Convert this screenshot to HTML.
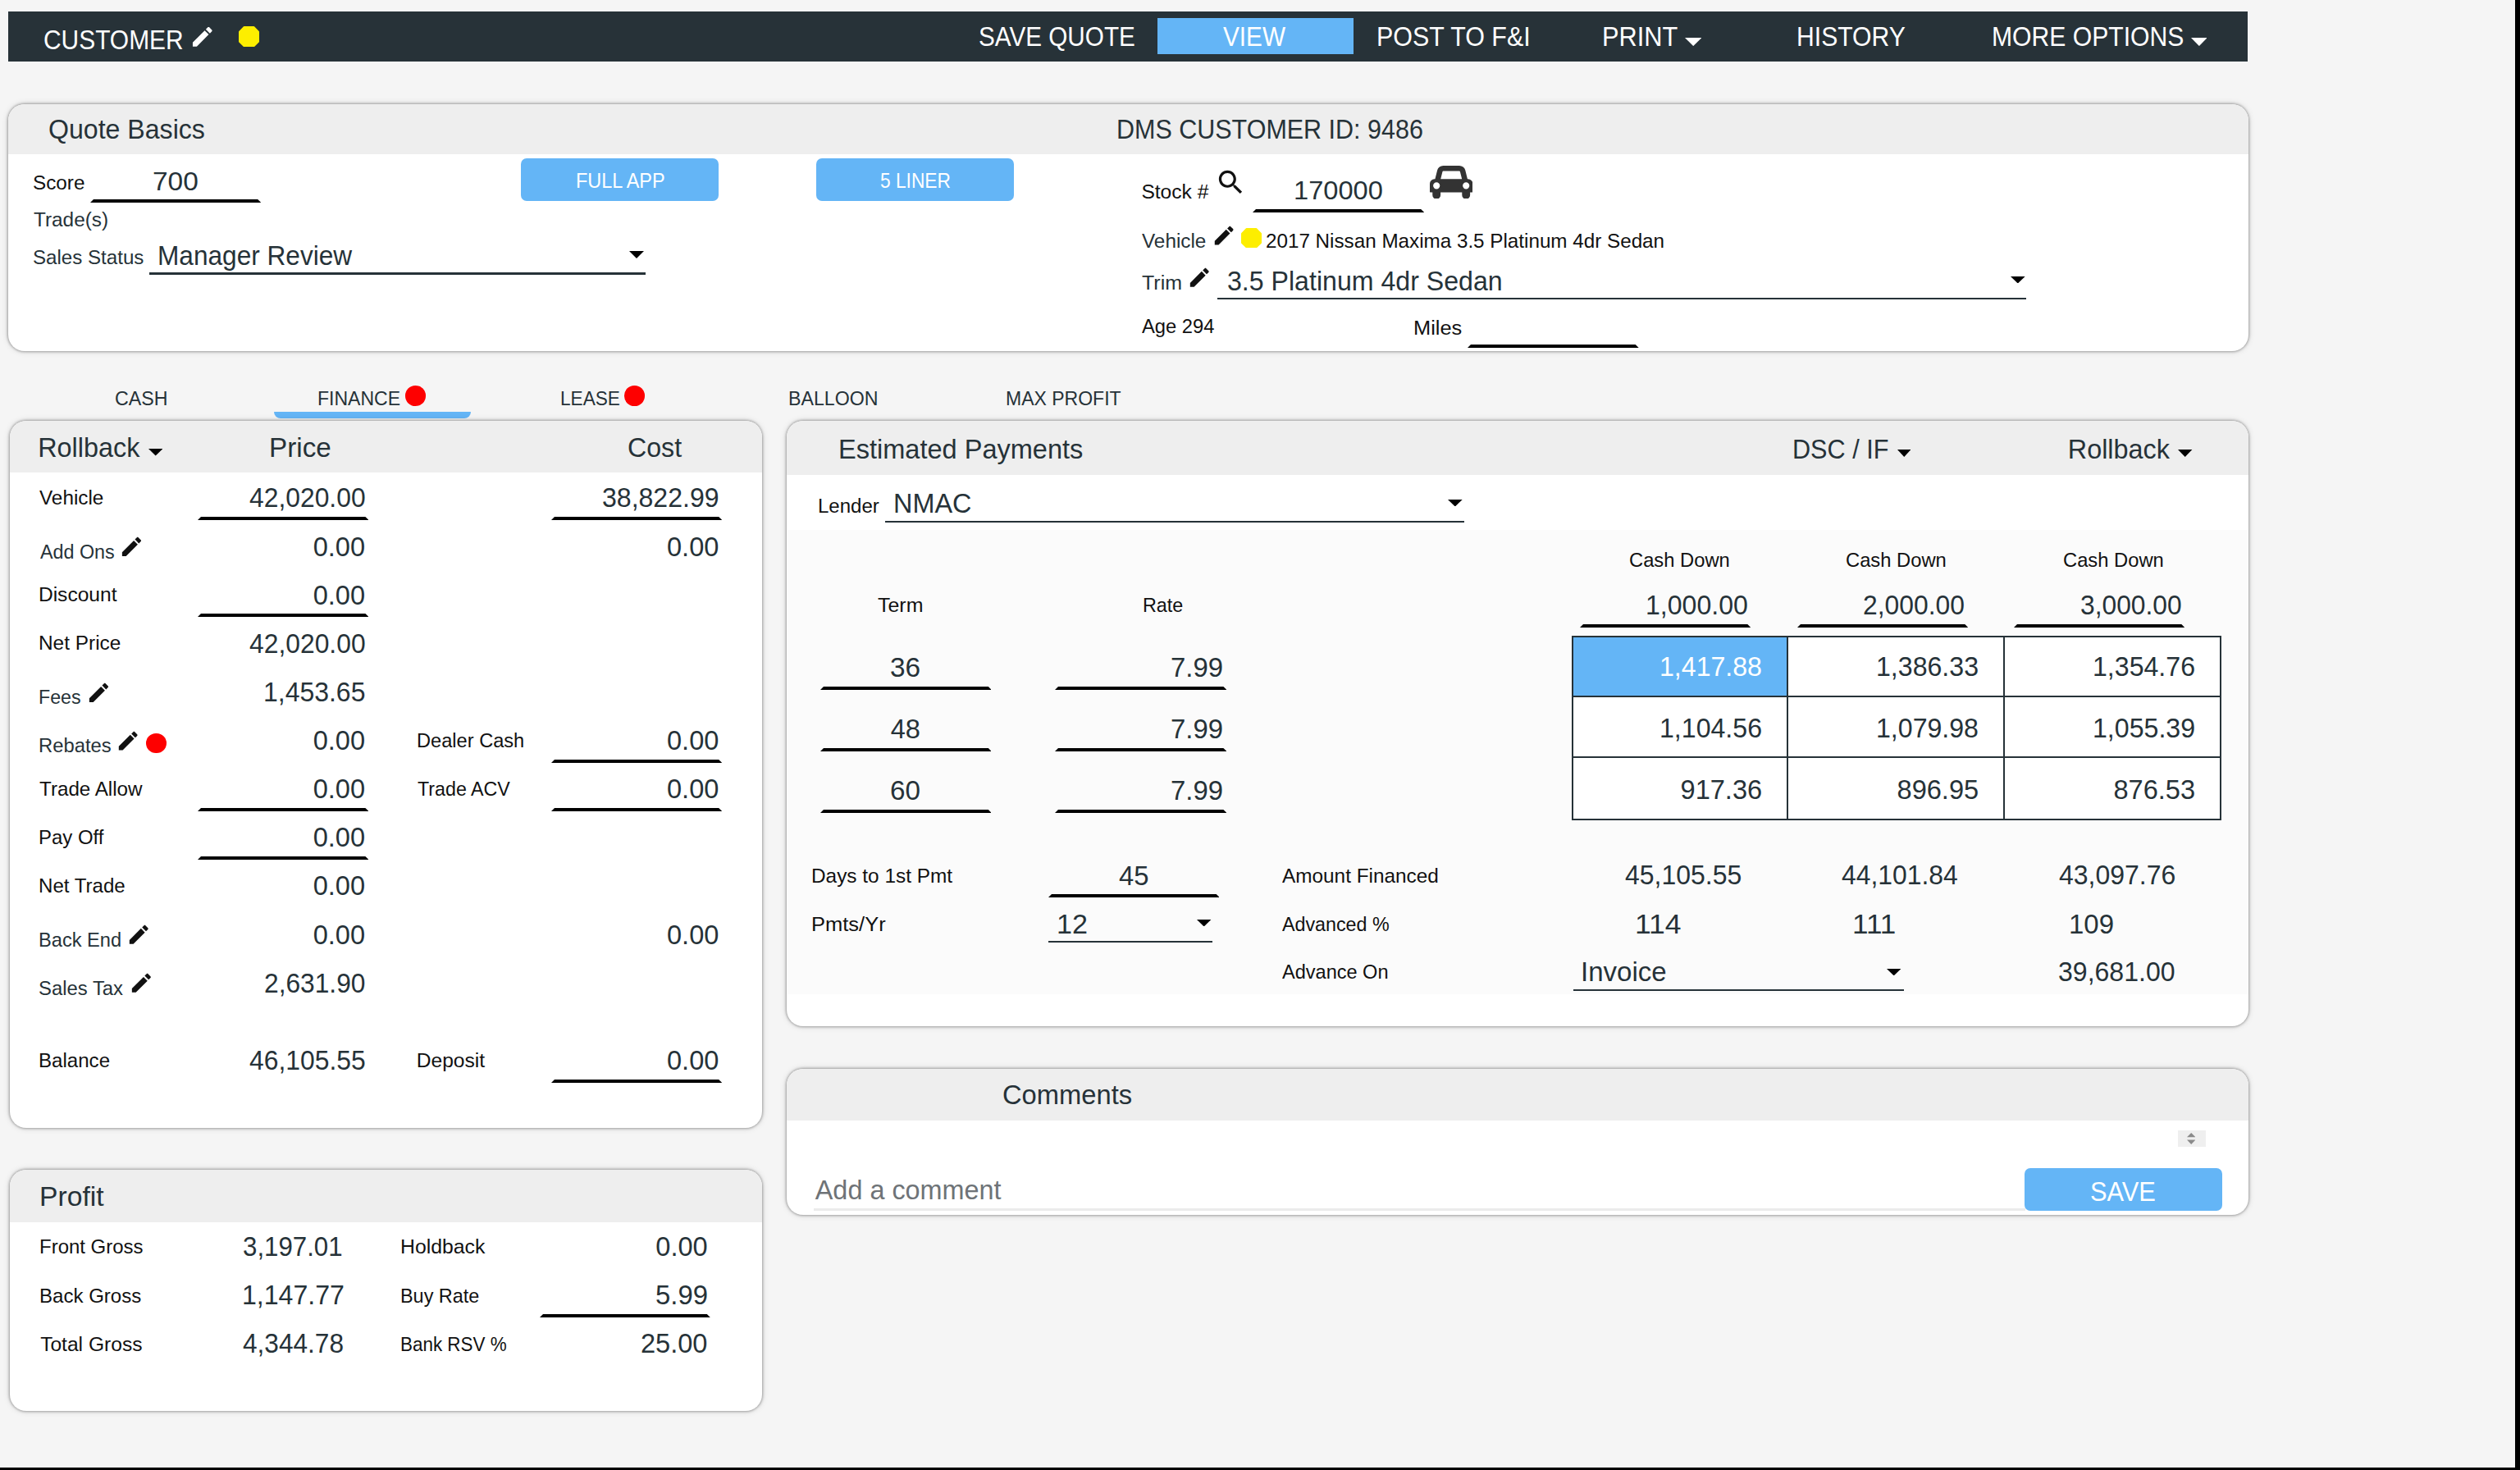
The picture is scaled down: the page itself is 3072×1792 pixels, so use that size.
<!DOCTYPE html>
<html lang="en">
<head>
<meta charset="utf-8">
<title>Desking - Quote</title>
<style>
html,body{margin:0;padding:0}
body{width:3072px;height:1792px;overflow:hidden;background:#000;font-family:"Liberation Sans", Arial, sans-serif;position:relative}
#page{position:absolute;left:0;top:0;width:3066.4px;height:1789.2px;background:#f5f5f5;overflow:hidden}
.r{position:absolute;display:block}
.t{position:absolute;white-space:pre;line-height:1;margin:0;padding:0;transform-origin:0 0}
.card{position:absolute;background:#fff;border-radius:20px;box-shadow:0 0 3px 1px rgba(0,0,0,.3),0 0 8px rgba(0,0,0,.14);overflow:hidden}
.chead{position:absolute;left:0;top:0;width:100%;background:#eeeeee}
.btn{background:#64b5f6;border-radius:7px}
.grid{background:#fff}
.grid .gl{background:#263238}
.k-nav{font-size:33px}
.k-title{font-size:32.4px}
.k-label{font-size:24.6px}
.k-val{font-size:32.6px}
.k-inp{font-size:32.2px}
.k-sel{font-size:32.4px}
.k-tab{font-size:24.4px}
.k-btn{font-size:26.6px}
.k-save{font-size:32.4px}
.k-ph{font-size:32.4px}
.k-veh{font-size:24.6px}
</style>
</head>
<body>
<div id="page">
<header id="hdr" aria-label="Top bar">
<div class="r bar" style="left:10.0px;top:14.3px;width:2730.0px;height:60.3px;background:#273238;"></div>
<svg class="r ico" style="left:230.8px;top:29.1px" width="31.6" height="31.6" viewBox="0 0 24 24"><path d="M3 17.25V21h3.75L17.81 9.940l-3.75-3.75L3 17.25zM20.71 7.040c.39-.39.39-1.020 0-1.410l-2.340-2.340c-.39-.39-1.020-.39-1.410 0l-1.830 1.830 3.750 3.750 1.830-1.830z" fill="#fff"/></svg>
<svg class="r dot" style="left:290.5px;top:31.7px" width="25.0" height="25.4" viewBox="0 0 25.0 25.4"><path d="M6.8 1.2L18.2 1.2L23.8 6.8L23.8 18.7L18.2 24.2L6.8 24.2L1.2 18.7L1.2 6.8Z" fill="#fdee00" stroke="#fdee00" stroke-width="2.4" stroke-linejoin="round"/></svg>
<div class="r navbtn" style="left:1410.7px;top:21.8px;width:239.3px;height:44.3px;background:#64b5f6;"></div>
<svg class="r tri" style="left:2053.5px;top:45.7px" width="20.4" height="10.1" viewBox="0 0 20.4 10.1"><path d="M0 0H20.4L10.20 10.1Z" fill="#fff"/></svg>
<svg class="r tri" style="left:2670.6px;top:45.7px" width="19.8" height="10.1" viewBox="0 0 19.8 10.1"><path d="M0 0H19.8L9.90 10.1Z" fill="#fff"/></svg>
<div class="t k-nav" style="left:53.46px;top:32px;color:#fff;transform:scaleX(0.9062)">CUSTOMER</div>
<div class="t k-nav" style="left:1192.55px;top:28px;color:#fff;transform:scaleX(0.8998)">SAVE QUOTE</div>
<div class="t k-nav" style="left:1491.43px;top:28px;color:#fff;transform:scaleX(0.9016)">VIEW</div>
<div class="t k-nav" style="left:1677.70px;top:28px;color:#fff;transform:scaleX(0.9218)">POST TO F&amp;I</div>
<div class="t k-nav" style="left:1953.47px;top:28px;color:#fff;transform:scaleX(0.9312)">PRINT</div>
<div class="t k-nav" style="left:2190.32px;top:28px;color:#fff;transform:scaleX(0.9131)">HISTORY</div>
<div class="t k-nav" style="left:2428.02px;top:28px;color:#fff;transform:scaleX(0.9132)">MORE OPTIONS</div>
</header>
<section id="qb" aria-label="Quote Basics">
<div class="card" style="left:10px;top:126.5px;width:2731px;height:301.5px"><div class="chead" style="height:61.5px"></div></div>
<svg class="r ul" style="left:110.3px;top:243.2px" width="208.2" height="4" viewBox="0 0 208.2 4"><path d="M4 0H204.2L208.2 4H0Z" fill="#000"/></svg>
<div class="r ul" style="left:182.3px;top:332.3px;width:604.9px;height:2.3px;background:#263238;"></div>
<svg class="r tri" style="left:767.0px;top:305.5px" width="18.0" height="9.0" viewBox="0 0 18.0 9.0"><path d="M0 0H18.0L9.00 9.0Z" fill="#000"/></svg>
<div class="r btn" style="left:635.4px;top:193.2px;width:240.8px;height:51.8px"></div>
<div class="r btn" style="left:995.4px;top:193.2px;width:240.7px;height:51.8px"></div>
<svg class="r ico" style="left:1480.5px;top:202.7px" width="38.8" height="38.8" viewBox="0 0 24 24"><path d="M15.5 14h-.79l-.28-.27C15.410 12.590 16 11.110 16 9.500 16 5.910 13.090 3 9.500 3S3 5.910 3 9.500 5.910 16 9.500 16c1.610 0 3.090-.59 4.230-1.570l.27.28v.79l5 4.990L20.490 19l-4.990-5zm-6 0C7.010 14 5 11.990 5 9.500S7.010 5 9.500 5 14 7.010 14 9.500 11.990 14 9.500 14z" fill="#111"/></svg>
<svg class="r ul" style="left:1527.0px;top:254.5px" width="209.2" height="4" viewBox="0 0 209.2 4"><path d="M4 0H205.2L209.2 4H0Z" fill="#000"/></svg>
<svg class="r ico" id="car" style="left:1742.6px;top:201.7px" width="52.4" height="40.6" viewBox="0 128 2048 1600" preserveAspectRatio="none"><path d="M480 1088q0-66-47-113t-113-47-113 47-47 113 47 113 113 47 113-47 47-113zm36-320h1016l-89-357q-2-8-14-17.500t-21-9.500h-768q-9 0-21 9.500t-14 17.500zm1372 320q0-66-47-113t-113-47-113 47-47 113 47 113 113 47 113-47 47-113zm160-96v384q0 14-9 23t-23 9h-96v128q0 80-56 136t-136 56-136-56-56-136v-128h-1024v128q0 80-56 136t-136 56-136-56-56-136v-128h-96q-14 0-23-9t-9-23v-384q0-93 65.500-158.500t158.500-65.500h28l105-419q23-94 104-157.500t179-63.500h768q98 0 179 63.500t104 157.500l105 419h28q93 0 158.500 65.500t65.500 158.500z" fill="#333"/></svg>
<svg class="r ico" style="left:1476.6px;top:272.1px" width="30.3" height="30.3" viewBox="0 0 24 24"><path d="M3 17.25V21h3.75L17.81 9.940l-3.75-3.75L3 17.25zM20.71 7.040c.39-.39.39-1.020 0-1.410l-2.340-2.340c-.39-.39-1.020-.39-1.410 0l-1.830 1.830 3.750 3.750 1.830-1.830z" fill="#111"/></svg>
<svg class="r dot" style="left:1512.9px;top:277.9px" width="25.0" height="24.5" viewBox="0 0 25.0 24.5"><path d="M6.8 1.2L18.2 1.2L23.8 6.8L23.8 17.8L18.2 23.3L6.8 23.3L1.2 17.8L1.2 6.8Z" fill="#fdee00" stroke="#fdee00" stroke-width="2.4" stroke-linejoin="round"/></svg>
<svg class="r ico" style="left:1446.9px;top:322.9px" width="30.5" height="30.5" viewBox="0 0 24 24"><path d="M3 17.25V21h3.75L17.81 9.940l-3.75-3.75L3 17.25zM20.71 7.040c.39-.39.39-1.020 0-1.410l-2.340-2.340c-.39-.39-1.020-.39-1.410 0l-1.830 1.830 3.750 3.750 1.830-1.830z" fill="#111"/></svg>
<div class="r ul" style="left:1484.2px;top:362.7px;width:985.9px;height:2.3px;background:#263238;"></div>
<svg class="r tri" style="left:2450.9px;top:336.8px" width="17.7" height="8.5" viewBox="0 0 17.7 8.5"><path d="M0 0H17.7L8.85 8.5Z" fill="#000"/></svg>
<svg class="r ul" style="left:1789.0px;top:420.0px" width="208.7" height="4" viewBox="0 0 208.7 4"><path d="M4 0H204.7L208.7 4H0Z" fill="#000"/></svg>
<div class="t k-title" style="left:59.44px;top:142px;color:#263238;transform:scaleX(0.9910)">Quote Basics</div>
<div class="t k-title" style="left:1361.29px;top:142px;color:#263238;transform:scaleX(0.9413)">DMS CUSTOMER ID: 9486</div>
<div class="t k-label" style="left:40.01px;top:211px;color:#111;transform:scaleX(0.9869)">Score</div>
<div class="t k-inp" style="left:185.67px;top:205px;color:#263238;transform:scaleX(1.0396)">700</div>
<div class="t k-label" style="left:40.83px;top:256px;color:#263238;transform:scaleX(0.9899)">Trade(s)</div>
<div class="t k-label" style="left:40.02px;top:302px;color:#263238;transform:scaleX(0.9805)">Sales Status</div>
<div class="t k-sel" style="left:192.40px;top:296px;color:#263238;transform:scaleX(0.9757)">Manager Review</div>
<div class="t k-btn" style="left:701.57px;top:207px;color:#fff;transform:scaleX(0.8817)">FULL APP</div>
<div class="t k-btn" style="left:1073.45px;top:207px;color:#fff;transform:scaleX(0.8544)">5 LINER</div>
<div class="t k-label" style="left:1391.39px;top:222px;color:#111">Stock #</div>
<div class="t k-inp" style="left:1576.87px;top:216px;color:#263238;transform:scaleX(1.0139)">170000</div>
<div class="t k-label" style="left:1392.43px;top:282px;color:#263238;transform:scaleX(0.9880)">Vehicle</div>
<div class="t k-veh" style="left:1542.92px;top:282px;color:#111;transform:scaleX(0.9849)">2017 Nissan Maxima 3.5 Platinum 4dr Sedan</div>
<div class="t k-label" style="left:1392.21px;top:333px;color:#263238;transform:scaleX(1.0161)">Trim</div>
<div class="t k-sel" style="left:1495.60px;top:327px;color:#263238;transform:scaleX(0.9914)">3.5 Platinum 4dr Sedan</div>
<div class="t k-label" style="left:1392.49px;top:386px;color:#111;transform:scaleX(0.9655)">Age 294</div>
<div class="t k-label" style="left:1723.03px;top:388px;color:#111;transform:scaleX(1.0322)">Miles</div>
</section>
<nav id="tabs" aria-label="Deal type tabs">
<div class="r dot" style="left:494.3px;top:470.2px;width:24.7px;height:24.6px;background:#fe0000;border-radius:50%;"></div>
<div class="r ink" style="left:333.7px;top:502.2px;width:240.2px;height:7.7px;background:#64b5f6;border-radius:0 0 8px 8px;"></div>
<div class="r dot" style="left:761.3px;top:470.2px;width:24.5px;height:24.6px;background:#fe0000;border-radius:50%;"></div>
<div class="t k-tab" style="left:139.85px;top:474px;color:#263238;transform:scaleX(0.9507)">CASH</div>
<div class="t k-tab" style="left:387.40px;top:474px;color:#263238;transform:scaleX(0.9439)">FINANCE</div>
<div class="t k-tab" style="left:683.03px;top:474px;color:#263238;transform:scaleX(0.9268)">LEASE</div>
<div class="t k-tab" style="left:961.19px;top:474px;color:#263238;transform:scaleX(0.9502)">BALLOON</div>
<div class="t k-tab" style="left:1225.80px;top:474px;color:#263238;transform:scaleX(0.9431)">MAX PROFIT</div>
</nav>
<section id="price" aria-label="Price and cost">
<div class="card" style="left:12.2px;top:512.6px;width:916.4px;height:862px"><div class="chead" style="height:63.5px"></div></div>
<svg class="r tri" style="left:180.7px;top:547.0px" width="17.4" height="8.6" viewBox="0 0 17.4 8.6"><path d="M0 0H17.4L8.70 8.6Z" fill="#000"/></svg>
<svg class="r ul" style="left:240.8px;top:629.8px" width="208.4" height="4" viewBox="0 0 208.4 4"><path d="M4 0H204.4L208.4 4H0Z" fill="#000"/></svg>
<svg class="r ul" style="left:672.0px;top:629.8px" width="208.2" height="4" viewBox="0 0 208.2 4"><path d="M4 0H204.2L208.2 4H0Z" fill="#000"/></svg>
<svg class="r ico" style="left:144.9px;top:651.4px" width="30.9" height="30.9" viewBox="0 0 24 24"><path d="M3 17.25V21h3.75L17.81 9.940l-3.75-3.75L3 17.25zM20.71 7.040c.39-.39.39-1.020 0-1.410l-2.340-2.340c-.39-.39-1.020-.39-1.410 0l-1.830 1.830 3.750 3.750 1.830-1.830z" fill="#111"/></svg>
<svg class="r ul" style="left:240.8px;top:748.1px" width="208.4" height="4" viewBox="0 0 208.4 4"><path d="M4 0H204.4L208.4 4H0Z" fill="#000"/></svg>
<svg class="r ico" style="left:104.5px;top:828.6px" width="30.9" height="30.9" viewBox="0 0 24 24"><path d="M3 17.25V21h3.75L17.81 9.940l-3.75-3.75L3 17.25zM20.71 7.040c.39-.39.39-1.020 0-1.410l-2.340-2.340c-.39-.39-1.020-.39-1.410 0l-1.830 1.830 3.750 3.750 1.830-1.830z" fill="#111"/></svg>
<svg class="r ico" style="left:141.0px;top:887.7px" width="30.4" height="30.4" viewBox="0 0 24 24"><path d="M3 17.25V21h3.75L17.81 9.940l-3.75-3.75L3 17.25zM20.71 7.040c.39-.39.39-1.020 0-1.410l-2.340-2.340c-.39-.39-1.020-.39-1.410 0l-1.830 1.830 3.750 3.750 1.830-1.830z" fill="#111"/></svg>
<div class="r dot" style="left:178.2px;top:893.8px;width:24.4px;height:24.3px;background:#fe0000;border-radius:50%;"></div>
<svg class="r ul" style="left:672.0px;top:925.5px" width="208.2" height="4" viewBox="0 0 208.2 4"><path d="M4 0H204.2L208.2 4H0Z" fill="#000"/></svg>
<svg class="r ul" style="left:240.8px;top:984.6px" width="208.4" height="4" viewBox="0 0 208.4 4"><path d="M4 0H204.4L208.4 4H0Z" fill="#000"/></svg>
<svg class="r ul" style="left:672.0px;top:984.6px" width="208.2" height="4" viewBox="0 0 208.2 4"><path d="M4 0H204.2L208.2 4H0Z" fill="#000"/></svg>
<svg class="r ul" style="left:240.8px;top:1043.7px" width="208.4" height="4" viewBox="0 0 208.4 4"><path d="M4 0H204.4L208.4 4H0Z" fill="#000"/></svg>
<svg class="r ico" style="left:153.5px;top:1124.1px" width="30.5" height="30.5" viewBox="0 0 24 24"><path d="M3 17.25V21h3.75L17.81 9.940l-3.75-3.75L3 17.25zM20.71 7.040c.39-.39.39-1.020 0-1.410l-2.340-2.340c-.39-.39-1.020-.39-1.410 0l-1.830 1.830 3.750 3.750 1.830-1.830z" fill="#111"/></svg>
<svg class="r ico" style="left:156.8px;top:1183.1px" width="30.7" height="30.7" viewBox="0 0 24 24"><path d="M3 17.25V21h3.75L17.81 9.940l-3.75-3.75L3 17.25zM20.71 7.040c.39-.39.39-1.020 0-1.410l-2.340-2.340c-.39-.39-1.020-.39-1.410 0l-1.830 1.830 3.750 3.750 1.830-1.830z" fill="#111"/></svg>
<svg class="r ul" style="left:672.0px;top:1315.8px" width="208.2" height="4" viewBox="0 0 208.2 4"><path d="M4 0H204.2L208.2 4H0Z" fill="#000"/></svg>
<div class="t k-title" style="left:46.15px;top:530px;color:#263238">Rollback</div>
<div class="t k-title" style="left:327.97px;top:530px;color:#263238;transform:scaleX(1.0268)">Price</div>
<div class="t k-title" style="left:765.05px;top:530px;color:#263238;transform:scaleX(0.9922)">Cost</div>
<div class="t k-label" style="left:48.23px;top:595px;color:#111;transform:scaleX(0.9880)">Vehicle</div>
<div class="t k-val" style="left:303.67px;top:591px;color:#263238;transform:scaleX(0.9769)">42,020.00</div>
<div class="t k-val" style="left:734.31px;top:591px;color:#263238;transform:scaleX(0.9833)">38,822.99</div>
<div class="t k-label" style="left:48.50px;top:661px;color:#263238;transform:scaleX(0.9484)">Add Ons</div>
<div class="t k-val" style="left:381.67px;top:651px;color:#263238">0.00</div>
<div class="t k-val" style="left:812.97px;top:651px;color:#263238">0.00</div>
<div class="t k-label" style="left:46.89px;top:713px;color:#111">Discount</div>
<div class="t k-val" style="left:381.67px;top:710px;color:#263238">0.00</div>
<div class="t k-label" style="left:46.91px;top:772px;color:#111;transform:scaleX(0.9918)">Net Price</div>
<div class="t k-val" style="left:303.67px;top:769px;color:#263238;transform:scaleX(0.9769)">42,020.00</div>
<div class="t k-label" style="left:47.00px;top:838px;color:#263238;transform:scaleX(0.9443)">Fees</div>
<div class="t k-val" style="left:320.84px;top:828px;color:#263238;transform:scaleX(0.9810)">1,453.65</div>
<div class="t k-label" style="left:46.96px;top:897px;color:#263238;transform:scaleX(0.9675)">Rebates</div>
<div class="t k-val" style="left:381.67px;top:887px;color:#263238">0.00</div>
<div class="t k-label" style="left:507.77px;top:891px;color:#111;transform:scaleX(0.9602)">Dealer Cash</div>
<div class="t k-val" style="left:812.97px;top:887px;color:#263238">0.00</div>
<div class="t k-label" style="left:48.23px;top:950px;color:#111;transform:scaleX(0.9840)">Trade Allow</div>
<div class="t k-val" style="left:381.67px;top:946px;color:#263238">0.00</div>
<div class="t k-label" style="left:509.06px;top:950px;color:#111;transform:scaleX(0.9446)">Trade ACV</div>
<div class="t k-val" style="left:812.97px;top:946px;color:#263238">0.00</div>
<div class="t k-label" style="left:46.94px;top:1009px;color:#111;transform:scaleX(0.9738)">Pay Off</div>
<div class="t k-val" style="left:381.67px;top:1005px;color:#263238">0.00</div>
<div class="t k-label" style="left:46.93px;top:1068px;color:#111;transform:scaleX(0.9794)">Net Trade</div>
<div class="t k-val" style="left:381.67px;top:1064px;color:#263238">0.00</div>
<div class="t k-label" style="left:46.97px;top:1134px;color:#263238;transform:scaleX(0.9607)">Back End</div>
<div class="t k-val" style="left:381.67px;top:1124px;color:#263238">0.00</div>
<div class="t k-val" style="left:812.97px;top:1124px;color:#263238">0.00</div>
<div class="t k-label" style="left:47.43px;top:1193px;color:#263238;transform:scaleX(0.9702)">Sales Tax</div>
<div class="t k-val" style="left:321.69px;top:1183px;color:#263238;transform:scaleX(0.9735)">2,631.90</div>
<div class="t k-label" style="left:46.93px;top:1281px;color:#111;transform:scaleX(0.9795)">Balance</div>
<div class="t k-val" style="left:303.67px;top:1277px;color:#263238;transform:scaleX(0.9776)">46,105.55</div>
<div class="t k-label" style="left:507.70px;top:1281px;color:#111">Deposit</div>
<div class="t k-val" style="left:812.97px;top:1277px;color:#263238">0.00</div>
</section>
<section id="profit" aria-label="Profit">
<div class="card" style="left:12.2px;top:1426.3px;width:916.4px;height:294.1px"><div class="chead" style="height:63.4px"></div></div>
<svg class="r ul" style="left:658.3px;top:1602.3px" width="207.8" height="4" viewBox="0 0 207.8 4"><path d="M4 0H203.8L207.8 4H0Z" fill="#000"/></svg>
<div class="t k-title" style="left:47.53px;top:1443px;color:#263238;transform:scaleX(1.0399)">Profit</div>
<div class="t k-label" style="left:47.84px;top:1508px;color:#111;transform:scaleX(0.9748)">Front Gross</div>
<div class="t k-val" style="left:295.74px;top:1504px;color:#263238;transform:scaleX(0.9591)">3,197.01</div>
<div class="t k-label" style="left:488.08px;top:1508px;color:#111;transform:scaleX(1.0076)">Holdback</div>
<div class="t k-val" style="left:799.27px;top:1504px;color:#263238">0.00</div>
<div class="t k-label" style="left:47.84px;top:1568px;color:#111;transform:scaleX(0.9779)">Back Gross</div>
<div class="t k-val" style="left:294.63px;top:1563px;color:#263238;transform:scaleX(0.9851)">1,147.77</div>
<div class="t k-label" style="left:488.19px;top:1568px;color:#111;transform:scaleX(0.9521)">Buy Rate</div>
<div class="t k-val" style="left:798.98px;top:1563px;color:#263238;transform:scaleX(1.0088)">5.99</div>
<div class="t k-label" style="left:49.13px;top:1627px;color:#111">Total Gross</div>
<div class="t k-val" style="left:296.38px;top:1622px;color:#263238;transform:scaleX(0.9699)">4,344.78</div>
<div class="t k-label" style="left:488.26px;top:1627px;color:#111;transform:scaleX(0.9116)">Bank RSV %</div>
<div class="t k-val" style="left:780.94px;top:1622px;color:#263238">25.00</div>
</section>
<section id="est" aria-label="Estimated payments">
<div class="card" style="left:958.5px;top:512.6px;width:1782px;height:738.7px"><div class="chead" style="height:66.4px"></div><div class="r" style="left:0;top:133.5px;width:100%;height:566px;background:#fbfbfb"></div></div>
<svg class="r tri" style="left:2312.5px;top:548.2px" width="16.5" height="8.9" viewBox="0 0 16.5 8.9"><path d="M0 0H16.5L8.25 8.9Z" fill="#000"/></svg>
<svg class="r tri" style="left:2655.4px;top:548.2px" width="17.4" height="8.9" viewBox="0 0 17.4 8.9"><path d="M0 0H17.4L8.70 8.9Z" fill="#000"/></svg>
<div class="r ul" style="left:1078.9px;top:634.6px;width:706.1px;height:2.3px;background:#263238;"></div>
<svg class="r tri" style="left:1765.2px;top:608.6px" width="17.7" height="8.5" viewBox="0 0 17.7 8.5"><path d="M0 0H17.7L8.85 8.5Z" fill="#000"/></svg>
<svg class="r ul" style="left:999.6px;top:836.6px" width="208.8" height="4" viewBox="0 0 208.8 4"><path d="M4 0H204.8L208.8 4H0Z" fill="#000"/></svg>
<svg class="r ul" style="left:1285.5px;top:836.6px" width="209.4" height="4" viewBox="0 0 209.4 4"><path d="M4 0H205.4L209.4 4H0Z" fill="#000"/></svg>
<svg class="r ul" style="left:999.6px;top:911.6px" width="208.8" height="4" viewBox="0 0 208.8 4"><path d="M4 0H204.8L208.8 4H0Z" fill="#000"/></svg>
<svg class="r ul" style="left:1285.5px;top:911.6px" width="209.4" height="4" viewBox="0 0 209.4 4"><path d="M4 0H205.4L209.4 4H0Z" fill="#000"/></svg>
<svg class="r ul" style="left:999.6px;top:986.7px" width="208.8" height="4" viewBox="0 0 208.8 4"><path d="M4 0H204.8L208.8 4H0Z" fill="#000"/></svg>
<svg class="r ul" style="left:1285.5px;top:986.7px" width="209.4" height="4" viewBox="0 0 209.4 4"><path d="M4 0H205.4L209.4 4H0Z" fill="#000"/></svg>
<svg class="r ul" style="left:1277.6px;top:1090.3px" width="208.7" height="4" viewBox="0 0 208.7 4"><path d="M4 0H204.7L208.7 4H0Z" fill="#000"/></svg>
<div class="r ul" style="left:1277.6px;top:1146.8px;width:200.5px;height:2.3px;background:#263238;"></div>
<svg class="r tri" style="left:1459.2px;top:1120.6px" width="17.4" height="8.5" viewBox="0 0 17.4 8.5"><path d="M0 0H17.4L8.70 8.5Z" fill="#000"/></svg>
<svg class="r ul" style="left:1926.1px;top:761.2px" width="208.3" height="4" viewBox="0 0 208.3 4"><path d="M4 0H204.3L208.3 4H0Z" fill="#000"/></svg>
<svg class="r ul" style="left:2190.5px;top:761.2px" width="208.3" height="4" viewBox="0 0 208.3 4"><path d="M4 0H204.3L208.3 4H0Z" fill="#000"/></svg>
<svg class="r ul" style="left:2454.9px;top:761.2px" width="208.3" height="4" viewBox="0 0 208.3 4"><path d="M4 0H204.3L208.3 4H0Z" fill="#000"/></svg>
<div class="r grid" style="left:1915.5px;top:775px;width:792.5px;height:225px"><div class="r" style="left:0;top:0;width:263px;height:73.6px;background:#64b5f6"></div><div class="r gl" style="left:0px;top:0;width:2px;height:100%"></div><div class="r gl" style="left:262px;top:0;width:2px;height:100%"></div><div class="r gl" style="left:526.3px;top:0;width:2px;height:100%"></div><div class="r gl" style="left:790.5px;top:0;width:2px;height:100%"></div><div class="r gl" style="left:0;top:0px;width:100%;height:2px"></div><div class="r gl" style="left:0;top:72.6px;width:100%;height:2px"></div><div class="r gl" style="left:0;top:147.3px;width:100%;height:2px"></div><div class="r gl" style="left:0;top:223px;width:100%;height:2px"></div></div>
<div class="r ul" style="left:1917.6px;top:1206.0px;width:403.2px;height:2.3px;background:#263238;"></div>
<svg class="r tri" style="left:2300.3px;top:1181.0px" width="17.4" height="8.4" viewBox="0 0 17.4 8.4"><path d="M0 0H17.4L8.70 8.4Z" fill="#000"/></svg>
<div class="t k-title" style="left:1022.23px;top:532px;color:#263238;transform:scaleX(1.0044)">Estimated Payments</div>
<div class="t k-title" style="left:2184.98px;top:532px;color:#263238;transform:scaleX(0.9453)">DSC / IF</div>
<div class="t k-title" style="left:2520.75px;top:532px;color:#263238">Rollback</div>
<div class="t k-label" style="left:997.14px;top:605px;color:#111;transform:scaleX(0.9775)">Lender</div>
<div class="t k-sel" style="left:1089.04px;top:598px;color:#263238">NMAC</div>
<div class="t k-label" style="left:1069.72px;top:726px;color:#111;transform:scaleX(1.0138)">Term</div>
<div class="t k-label" style="left:1393.09px;top:726px;color:#111;transform:scaleX(0.9478)">Rate</div>
<div class="t k-val" style="left:1085.05px;top:798px;color:#263238;transform:scaleX(1.0246)">36</div>
<div class="t k-val" style="left:1426.70px;top:798px;color:#263238;transform:scaleX(1.0101)">7.99</div>
<div class="t k-val" style="left:1085.75px;top:873px;color:#263238">48</div>
<div class="t k-val" style="left:1426.70px;top:873px;color:#263238;transform:scaleX(1.0101)">7.99</div>
<div class="t k-val" style="left:1084.77px;top:948px;color:#263238;transform:scaleX(1.0207)">60</div>
<div class="t k-val" style="left:1426.70px;top:948px;color:#263238;transform:scaleX(1.0101)">7.99</div>
<div class="t k-label" style="left:989.21px;top:1056px;color:#111;transform:scaleX(0.9913)">Days to 1st Pmt</div>
<div class="t k-val" style="left:1363.55px;top:1052px;color:#263238;transform:scaleX(1.0078)">45</div>
<div class="t k-label" style="left:989.12px;top:1115px;color:#111;transform:scaleX(1.0366)">Pmts/Yr</div>
<div class="t k-sel" style="left:1287.67px;top:1111px;color:#263238;transform:scaleX(1.0539)">12</div>
<div class="t k-label" style="left:1985.72px;top:671px;color:#111;transform:scaleX(0.9656)">Cash Down</div>
<div class="t k-val" style="left:2005.93px;top:722px;color:#263238;transform:scaleX(0.9843)">1,000.00</div>
<div class="t k-label" style="left:2250.12px;top:671px;color:#111;transform:scaleX(0.9656)">Cash Down</div>
<div class="t k-val" style="left:2271.18px;top:722px;color:#263238;transform:scaleX(0.9775)">2,000.00</div>
<div class="t k-label" style="left:2514.52px;top:671px;color:#111;transform:scaleX(0.9656)">Cash Down</div>
<div class="t k-val" style="left:2535.82px;top:722px;color:#263238;transform:scaleX(0.9756)">3,000.00</div>
<div class="t k-val" style="left:2023.33px;top:797px;color:#fff;transform:scaleX(0.9854)">1,417.88</div>
<div class="t k-val" style="left:2287.23px;top:797px;color:#263238;transform:scaleX(0.9856)">1,386.33</div>
<div class="t k-val" style="left:2551.13px;top:797px;color:#263238;transform:scaleX(0.9856)">1,354.76</div>
<div class="t k-val" style="left:2023.33px;top:872px;color:#263238;transform:scaleX(0.9856)">1,104.56</div>
<div class="t k-val" style="left:2287.23px;top:872px;color:#263238;transform:scaleX(0.9854)">1,079.98</div>
<div class="t k-val" style="left:2551.13px;top:872px;color:#263238;transform:scaleX(0.9863)">1,055.39</div>
<div class="t k-val" style="left:2048.52px;top:947px;color:#263238">917.36</div>
<div class="t k-val" style="left:2312.52px;top:947px;color:#263238">896.95</div>
<div class="t k-val" style="left:2576.42px;top:947px;color:#263238">876.53</div>
<div class="t k-label" style="left:1563.09px;top:1056px;color:#111;transform:scaleX(0.9901)">Amount Financed</div>
<div class="t k-val" style="left:1980.87px;top:1051px;color:#263238;transform:scaleX(0.9818)">45,105.55</div>
<div class="t k-val" style="left:2245.27px;top:1051px;color:#263238;transform:scaleX(0.9778)">44,101.84</div>
<div class="t k-val" style="left:2509.67px;top:1051px;color:#263238;transform:scaleX(0.9822)">43,097.76</div>
<div class="t k-label" style="left:1563.10px;top:1115px;color:#111;transform:scaleX(0.9459)">Advanced %</div>
<div class="t k-val" style="left:1992.87px;top:1111px;color:#263238;transform:scaleX(1.0902)">114</div>
<div class="t k-val" style="left:2257.60px;top:1111px;color:#263238;transform:scaleX(1.0771)">111</div>
<div class="t k-val" style="left:2522.46px;top:1111px;color:#263238;transform:scaleX(1.0125)">109</div>
<div class="t k-label" style="left:1563.10px;top:1173px;color:#111;transform:scaleX(0.9568)">Advance On</div>
<div class="t k-sel" style="left:1927.16px;top:1169px;color:#263238;transform:scaleX(1.0191)">Invoice</div>
<div class="t k-val" style="left:2509.21px;top:1169px;color:#263238;transform:scaleX(0.9836)">39,681.00</div>
</section>
<section id="cmt" aria-label="Comments">
<div class="card" style="left:958.5px;top:1302.8px;width:1782px;height:178.4px"><div class="chead" style="height:63.1px"></div></div>
<div class="r ul" style="left:992.4px;top:1473.0px;width:1476.2px;height:3.2px;background:#ebebeb;"></div>
<div class="r spin" style="left:2654.5px;top:1378.1px;width:34.1px;height:20.1px;background:#efefef;"></div>
<svg class="r" style="left:2666px;top:1381.2px" width="10.4" height="14" viewBox="0 0 10.4 14"><path d="M0 5.200L5.200 0L10.400 5.200ZM0 8.500H10.400L5.200 14Z" fill="#8a8a8a"/></svg>
<div class="r btn" style="left:2468px;top:1423.8px;width:240.7px;height:51.9px"></div>
<div class="t k-title" style="left:1221.92px;top:1319px;color:#263238;transform:scaleX(1.0096)">Comments</div>
<div class="t k-ph" style="left:993.77px;top:1435px;color:#6e7377">Add a comment</div>
<div class="t k-save" style="left:2547.69px;top:1437px;color:#fff;transform:scaleX(0.9510)">SAVE</div>
</section>
</div>
</body>
</html>
